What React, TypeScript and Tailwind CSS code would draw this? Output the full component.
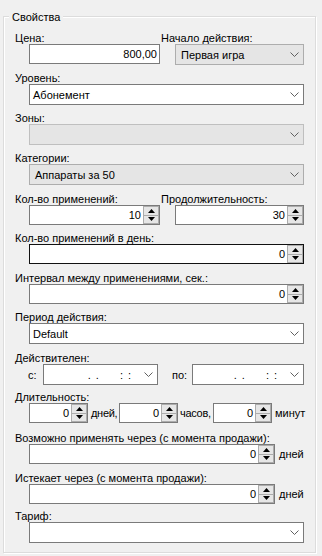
import React from "react";

type Variant = "edit" | "list" | "disabled";

const Chevron = () => (
  <svg width="9" height="5" viewBox="0 0 9 5" className="shrink-0">
    <polyline points="0.5,0.5 4.5,4.5 8.5,0.5" fill="none" stroke="#606060" strokeWidth="1" />
  </svg>
);

const Label = ({ children, className = "" }: { children: React.ReactNode; className?: string }) => (
  <div className={`h-[12px] leading-[12px] whitespace-nowrap ${className}`}>{children}</div>
);

const Combo = ({ text = "", variant = "edit", className = "" }: { text?: string; variant?: Variant; className?: string }) => {
  const look =
    variant === "edit"
      ? "bg-white border-[#7a7a7a] pl-[3px]"
      : variant === "list"
      ? "bg-[#e5e5e5] border-[#adadad] pl-[5px]"
      : "bg-[#e5e5e5] border-[#bfbfbf] pl-[3px]";
  return (
    <div className={`h-[21px] border flex items-center pr-[4px] ${look} ${className}`}>
      <span className="flex-1 whitespace-nowrap">{text}</span>
      <Chevron />
    </div>
  );
};

const Arrow = ({ up }: { up?: boolean }) => (
  <svg width="7" height="4" viewBox="0 0 7 4">
    <polygon points={up ? "0,4 7,4 3.5,0" : "0,0 7,0 3.5,4"} fill="#000" />
  </svg>
);

const SpinButtons = () => (
  <div className="w-[16px] flex flex-col">
    <div className="flex-1 bg-[#e6e6e6] border border-[#acacac] flex items-center justify-center">
      <Arrow up />
    </div>
    <div className="flex-1 bg-[#e6e6e6] border border-t-0 border-[#acacac] flex items-center justify-center">
      <Arrow />
    </div>
  </div>
);

const Spinner = ({ value, className = "", focused = false }: { value: string; className?: string; focused?: boolean }) => (
  <div className={`h-[20px] flex bg-white border ${focused ? "border-[#111111]" : "border-[#7a7a7a]"} ${className}`}>
    <div className="flex-1 flex items-center justify-end pr-[2px]">{value}</div>
    <SpinButtons />
  </div>
);

const DatePicker = ({ className = "" }: { className?: string }) => (
  <div className={`h-[21px] bg-white border border-[#7a7a7a] flex items-center justify-end pr-[4px] ${className}`}>
    <span>.</span>
    <span className="ml-[5px]">.</span>
    <span className="ml-[21px]">:</span>
    <span className="ml-[5px]">:</span>
    <span className="ml-[13px] flex">
      <Chevron />
    </span>
  </div>
);

export default function App() {
  return (
    <div className="w-[322px] h-[556px] bg-[#f0f0f0] pt-[16px] pl-[3px] text-[11px] leading-[12px] text-black font-['Liberation_Sans',Arial,sans-serif]">
      <div className="relative w-[313px] h-[537px] border border-[#dcdcdc] shadow-[inset_1px_1px_0_#ffffff,1px_1px_0_#ffffff] pl-[11px]">
        <span className="absolute left-[5px] top-[-6px] px-[3px] bg-[#f0f0f0] leading-[12px]">Свойства</span>

        {/* Цена / Начало действия */}
        <div className="flex mt-[15px]">
          <div className="w-[146px]">
            <Label>Цена:</Label>
            <div className="ml-[14px] w-[131px] h-[20px] bg-white border border-[#7a7a7a] flex items-center justify-end pr-[2px]">
              800,00
            </div>
          </div>
          <div>
            <Label>Начало действия:</Label>
            <Combo text="Первая игра" variant="list" className="ml-[14px] w-[129px]" />
          </div>
        </div>

        <Label className="mt-[7px]">Уровень:</Label>
        <Combo text="Абонемент" className="ml-[14px] w-[275px]" />

        <Label className="mt-[7px]">Зоны:</Label>
        <Combo variant="disabled" className="ml-[14px] w-[275px]" />

        <Label className="mt-[7px]">Категории:</Label>
        <Combo text="Аппараты за 50" variant="list" className="ml-[14px] w-[275px]" />

        {/* Кол-во применений / Продолжительность */}
        <div className="flex mt-[8px]">
          <div className="w-[146px]">
            <Label>Кол-во применений:</Label>
            <Spinner value="10" className="ml-[14px] w-[131px]" />
          </div>
          <div>
            <Label>Продолжительность:</Label>
            <Spinner value="30" className="ml-[14px] w-[129px]" />
          </div>
        </div>

        <Label className="mt-[7px]">Кол-во применений в день:</Label>
        <Spinner value="0" focused className="ml-[14px] w-[275px]" />

        <Label className="mt-[8px]">Интервал между применениями, сек.:</Label>
        <Spinner value="0" className="ml-[14px] w-[275px]" />

        <Label className="mt-[7px]">Период действия:</Label>
        <Combo text="Default" className="ml-[14px] w-[275px]" />

        <Label className="mt-[8px]">Действителен:</Label>
        <div className="flex items-center">
          <span className="ml-[13px] w-[15px]">с:</span>
          <DatePicker className="w-[115px]" />
          <span className="ml-[14px] w-[20px]">по:</span>
          <DatePicker className="w-[112px]" />
        </div>

        <Label className="mt-[6px]">Длительность:</Label>
        <div className="flex items-center">
          <Spinner value="0" className="ml-[14px] w-[59px] shrink-0" />
          <span className="w-[31px] shrink-0 pl-[3px] whitespace-nowrap tracking-[-0.3px]">дней,</span>
          <Spinner value="0" className="w-[59px] shrink-0" />
          <span className="w-[35px] shrink-0 pl-[2px] whitespace-nowrap tracking-[-0.3px]">часов,</span>
          <Spinner value="0" className="w-[59px] shrink-0" />
          <span className="pl-[3px] whitespace-nowrap">минут</span>
        </div>

        <Label className="mt-[9px]">Возможно применять через (с момента продажи):</Label>
        <div className="flex items-center">
          <Spinner value="0" className="ml-[14px] w-[246px]" />
          <span className="pl-[4px]">дней</span>
        </div>

        <Label className="mt-[8px]">Истекает через (с момента продажи):</Label>
        <div className="flex items-center">
          <Spinner value="0" className="ml-[14px] w-[246px]" />
          <span className="pl-[4px]">дней</span>
        </div>

        <Label className="mt-[6px]">Тариф:</Label>
        <Combo className="ml-[14px] w-[275px]" />
      </div>
    </div>
  );
}
